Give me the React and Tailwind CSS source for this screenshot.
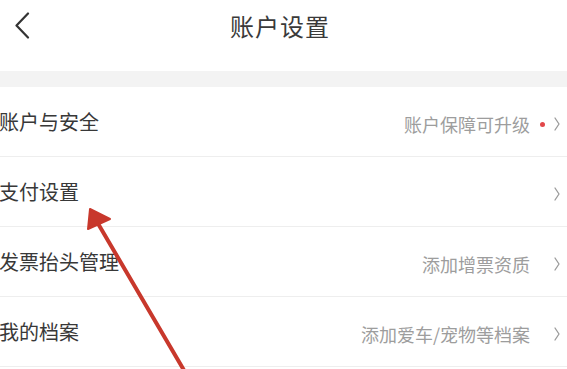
const rows = [
  { title: '账户与安全', note: '账户保障可升级', dot: true },
  { title: '支付设置', note: '' },
  { title: '发票抬头管理', note: '添加增票资质' },
  { title: '我的档案', note: '添加爱车/宠物等档案' },
]

const App = () => {
  return (
    <div className="relative w-[567px] h-[369px] overflow-hidden bg-white font-['Noto_Sans_CJK_SC','Noto_Sans',sans-serif]">
      {/* Header */}
      <div className="h-[71px] pb-[20px] flex items-center">
        <svg className="ml-[14px] w-[16px] h-[28px]" viewBox="0 0 16 28" fill="none">
          <path d="M14 1.5 L2.5 13.5 L14 25.5" stroke="#333" strokeWidth="2.2" strokeLinecap="round" strokeLinejoin="round" />
        </svg>
        <h1 className="ml-[200px] text-[24px] leading-none text-[#3a3a3a] tracking-[1px]">账户设置</h1>
      </div>

      {/* Gray band */}
      <div className="h-[16px] bg-[#f3f3f3]" />

      {/* Rows */}
      <div>
        {rows.map((row, i) => (
          <div key={i} className="h-[70px] flex items-center border-b border-[#eeeeee]">
            <span className="ml-[-1px] text-[20px] text-[#383838] leading-none">{row.title}</span>
            <span className="ml-auto mt-[5px] text-[18px] text-[#9d9d9d] leading-none">{row.note}</span>
            <span className="w-[24px] mt-[5px] flex justify-center">
              {row.dot && <span className="w-[5px] h-[5px] rounded-full bg-[#e2474a]" />}
            </span>
            <svg className="mr-[7px] mt-[5px] w-[6px] h-[14px]" viewBox="0 0 6 14" fill="none">
              <path d="M1 1 L5 7 L1 13" stroke="#9a9a9a" strokeWidth="1.3" strokeLinecap="round" strokeLinejoin="round" />
            </svg>
          </div>
        ))}
      </div>

      {/* Annotation arrow */}
      <svg className="absolute inset-0 pointer-events-none" width="567" height="369" viewBox="0 0 567 369">
        <path d="M93 215 L185 372" stroke="#c8382c" strokeWidth="4" strokeLinecap="round" />
        <path d="M90 209 L88 229 L110 219 Z" fill="#c8382c" stroke="#c8382c" strokeWidth="2" strokeLinejoin="round" />
      </svg>
    </div>
  )
}

export default App
